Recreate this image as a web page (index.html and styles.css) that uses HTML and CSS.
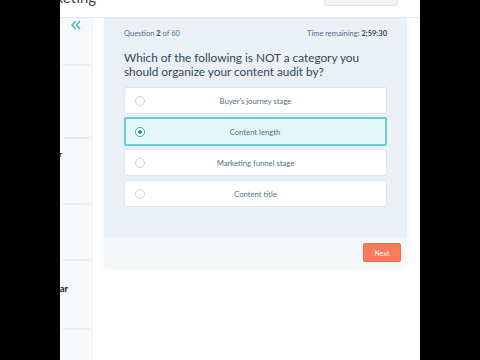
FILE: index.html
```html
<!DOCTYPE html>
<html lang="en">
<head>
    <meta charset="UTF-8">
    <title>Content Marketing Exam</title>
    <link rel="stylesheet" href="styles.css">
</head>
<body>
    <div class="page">
        <div class="top-bar">
            <div class="exam-title">Marketing</div>
            <div class="top-button"></div>
        </div>

        <div class="layout">
            <div class="sidebar">
                <div class="collapse-icon">
                    <svg width="10" height="10" viewBox="0 0 10 10">
                        <path d="M4.5 1 L1 5 L4.5 9 M9 1 L5.5 5 L9 9" fill="none" stroke="#2fb5c5" stroke-width="1.3"/>
                    </svg>
                </div>
                <div class="side-item second"></div>
                <div class="side-item third"><span class="side-label cut1">Chapter</span></div>
                <div class="side-item fourth"></div>
                <div class="side-item fifth"><span class="side-label cut2">Calendar</span></div>
                <div class="side-item last"></div>
            </div>

            <div class="quiz-card">
                <div class="quiz-body">
                    <div class="quiz-meta">
                        <span>Question <b>2</b> of 60</span>
                        <span>Time remaining: <b>2:59:30</b></span>
                    </div>
                    <div class="question">Which of the following is NOT a category you should organize your content audit by?</div>

                    <div class="options">
                        <label class="option"><span class="radio"></span><span class="option-text">Buyer's journey stage</span></label>
                        <label class="option selected"><span class="radio"></span><span class="option-text">Content length</span></label>
                        <label class="option"><span class="radio"></span><span class="option-text">Marketing funnel stage</span></label>
                        <label class="option"><span class="radio"></span><span class="option-text">Content title</span></label>
                    </div>
                </div>
                <div class="quiz-footer">
                    <button class="next-btn">Next</button>
                </div>
            </div>
        </div>
    </div>
</body>
</html>
```

FILE: styles.css
```css
html, body {
    margin: 0;
    padding: 0;
    background-color: #000;
}
body {
    font-family: Lato, "Open Sans", sans-serif;
    color: #33475b;
}
.page {
    width: 360px;
    height: 360px;
    margin-left: 60px;
    background-color: #fff;
    overflow: hidden;
}
.top-bar {
    height: 17px;
    border-bottom: 1px solid #e3e8ee;
    display: flex;
    justify-content: space-between;
    overflow: hidden;
}
.exam-title {
    font-size: 15px;
    line-height: 15px;
    margin-top: -10px;
    margin-left: -31px;
    color: #33475b;
}
.top-button {
    width: 72px;
    height: 5px;
    margin-right: 22px;
    background-color: #eef2f6;
    border: 1px solid #dfe5ec;
    border-top: none;
    border-radius: 0 0 2px 2px;
}
.layout {
    display: flex;
    align-items: flex-start;
}
.sidebar {
    width: 30px;
    height: 342px;
    background-color: #f6f8fa;
    border-right: 1px solid #eef1f5;
    padding-right: 2px;
}
.collapse-icon {
    height: 48px;
    padding: 2px 0 0 8px;
    box-sizing: border-box;
    border-bottom: 2px solid #e8ecf0;
    margin-left: 3px;
}
.collapse-icon svg {
    display: block;
}
.side-item {
    border-bottom: 2px solid #e8ecf0;
    position: relative;
    margin-left: 3px;
}
.second { height: 71px; }
.third { height: 64px; }
.fourth { height: 54px; }
.fifth { height: 67px; }
.last { height: 40px; border-bottom: none; }
.side-label {
    position: absolute;
    font-weight: 700;
    color: #222;
}
.cut1 {
    font-size: 8px;
    top: 10px;
    right: 28px;
}
.cut2 {
    font-size: 9.5px;
    top: 22px;
    right: 22px;
}
.quiz-card {
    width: 303px;
    margin-left: 11px;
    box-shadow: 0 2px 4px rgba(45, 62, 80, 0.06);
}
.quiz-body {
    background-color: #eaf0f6;
    height: 220px;
    padding: 11px 20px 0 20px;
    box-sizing: border-box;
}
.quiz-meta {
    display: flex;
    justify-content: space-between;
    font-size: 7.5px;
    color: #516f90;
}
.quiz-meta b {
    color: #33475b;
}
.question {
    margin-top: 13px;
    font-size: 11.8px;
    line-height: 14px;
    color: #33475b;
    width: 250px;
}
.options {
    margin-top: 8px;
    display: flex;
    flex-direction: column;
    gap: 4px;
}
.option {
    height: 27px;
    background-color: #fff;
    border: 1px solid #dfe5ec;
    border-radius: 2px;
    display: flex;
    align-items: center;
    position: relative;
    box-sizing: border-box;
}
.option.selected {
    background-color: #e5f6f8;
    border: 2px solid #6ccad5;
    height: 29px;
    margin: -1px 0;
}
.radio {
    width: 8px;
    height: 8px;
    border: 1px solid #cbd6e2;
    border-radius: 50%;
    margin-left: 10px;
    background-color: #fff;
    position: relative;
}
.selected .radio {
    border-color: #2fa9b8;
    margin-left: 9px;
}
.selected .radio::after {
    content: "";
    position: absolute;
    left: 2px;
    top: 2px;
    width: 4px;
    height: 4px;
    border-radius: 50%;
    background-color: #1b8fa0;
}
.option-text {
    flex: 1;
    text-align: center;
    font-size: 7.7px;
    color: #516f90;
    margin-right: 20px;
}
.quiz-footer {
    height: 29px;
    background-color: #f5f8fa;
    display: flex;
    justify-content: flex-end;
    align-items: center;
    padding-right: 6px;
}
.next-btn {
    width: 38px;
    height: 19px;
    background-color: #ff7a59;
    border: 1px solid #f0684a;
    border-radius: 2px;
    color: #fff;
    font-family: Lato, sans-serif;
    font-size: 7px;
    padding: 0;
}
```
